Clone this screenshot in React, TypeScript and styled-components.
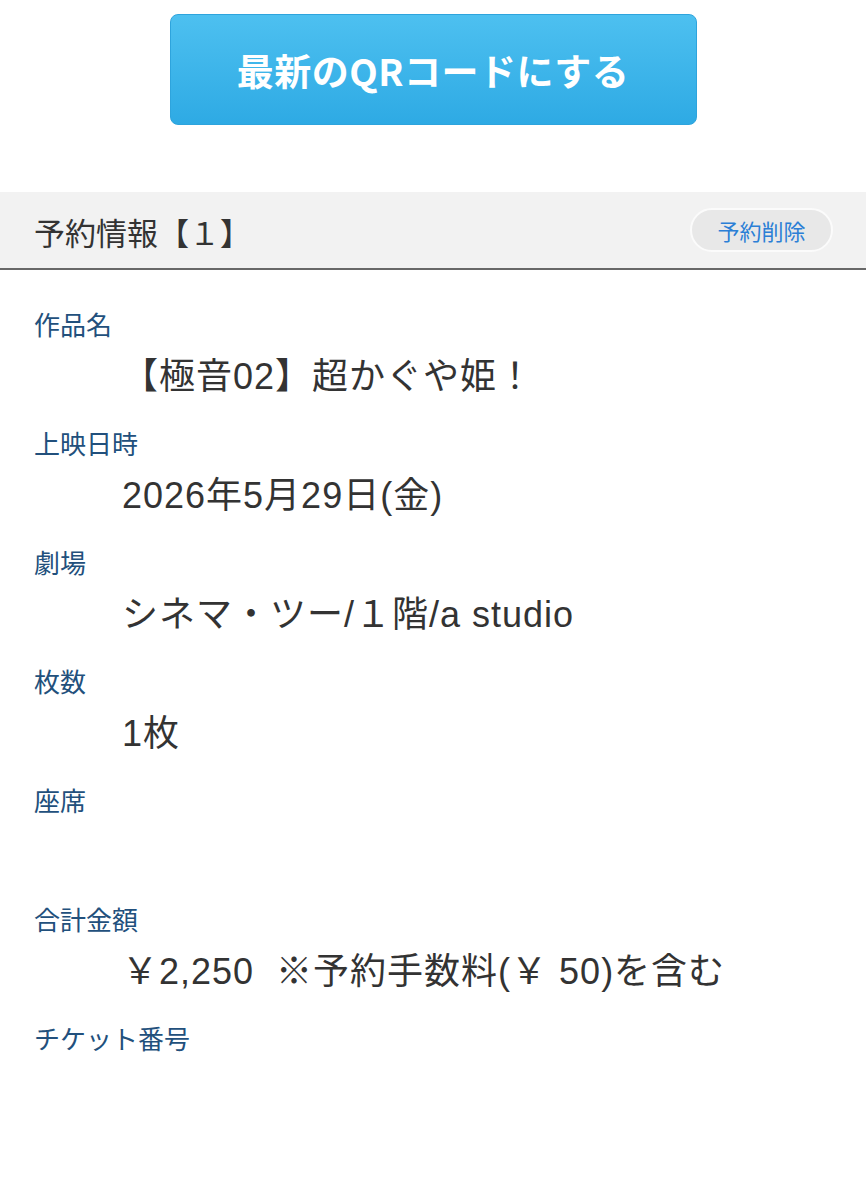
import React from 'react';
import styled, { createGlobalStyle } from 'styled-components';

const GlobalStyle = createGlobalStyle`
  body {
    margin: 0;
    background: #fff;
    font-family: "Liberation Sans", "Noto Sans CJK JP", sans-serif;
    color: #333;
  }
`;

const Page = styled.div`
  width: 866px;
  padding-top: 14px;
`;

const ButtonRow = styled.div`
  display: flex;
  justify-content: center;
`;

const RefreshButton = styled.button`
  width: 527px;
  height: 111px;
  border: 1px solid #2ea4dd;
  border-radius: 8px;
  background: linear-gradient(#4dc0f0, #2eaae4);
  color: #fff;
  font-family: "Noto Sans CJK JP", sans-serif;
  font-size: 37px;
  font-weight: 700;
  letter-spacing: 0.5px;
  cursor: pointer;
`;

const Header = styled.div`
  margin-top: 67px;
  height: 76px;
  background: #f2f2f2;
  border-bottom: 2px solid #686868;
  display: flex;
  align-items: center;
  justify-content: space-between;
  padding: 0 34px;
`;

const HeaderTitle = styled.div`
  font-family: "Noto Sans CJK JP", sans-serif;
  font-size: 31px;
  color: #333;
  margin-top: 2px;
`;

const DeleteButton = styled.button`
  height: 44px;
  width: 143px;
  margin-right: -1px;
  border-radius: 22px;
  border: 2px solid #fbfbfb;
  background: #e8e8e8;
  color: #2b7fd6;
  font-family: "Noto Sans CJK JP", sans-serif;
  font-size: 22px;
  cursor: pointer;
`;

const Details = styled.div`
  display: flex;
  flex-direction: column;
  gap: 29px;
  padding-top: 39px;
`;

const Field = styled.div`
  display: flex;
  flex-direction: column;
`;

const Label = styled.div`
  padding-left: 34px;
  font-family: "Noto Sans CJK JP", sans-serif;
  font-size: 26px;
  line-height: 30px;
  color: #22507c;
`;

const Value = styled.div`
  margin-top: 16px;
  padding-left: 122px;
  font-size: 36px;
  line-height: 44px;
  height: 44px;
  letter-spacing: 1px;
  color: #333;
  white-space: pre;
`;

const fields: { label: string; value: string }[] = [
  { label: '作品名', value: '【極音02】超かぐや姫！' },
  { label: '上映日時', value: '2026年5月29日(金)' },
  { label: '劇場', value: 'シネマ・ツー/１階/a studio' },
  { label: '枚数', value: '1枚' },
  { label: '座席', value: '' },
  { label: '合計金額', value: '￥2,250  ※予約手数料(￥ 50)を含む' },
  { label: 'チケット番号', value: '' },
];

export default function App() {
  return (
    <Page>
      <GlobalStyle />
      <ButtonRow>
        <RefreshButton>最新のQRコードにする</RefreshButton>
      </ButtonRow>
      <Header>
        <HeaderTitle>予約情報【１】</HeaderTitle>
        <DeleteButton>予約削除</DeleteButton>
      </Header>
      <Details>
        {fields.map((f) => (
          <Field key={f.label}>
            <Label>{f.label}</Label>
            <Value>{f.value}</Value>
          </Field>
        ))}
      </Details>
    </Page>
  );
}
